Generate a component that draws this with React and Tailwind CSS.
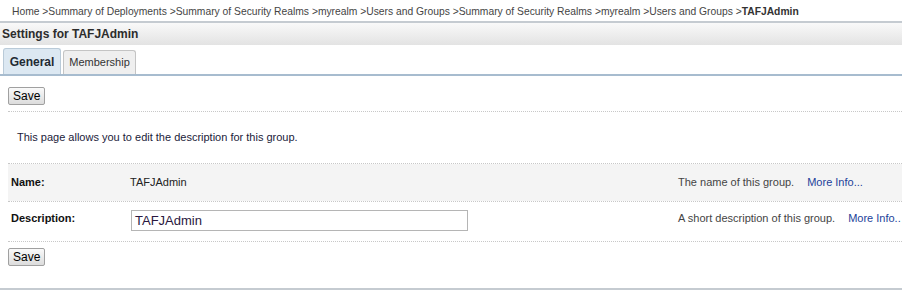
const crumbs = [
  'Home',
  'Summary of Deployments',
  'Summary of Security Realms',
  'myrealm',
  'Users and Groups',
  'Summary of Security Realms',
  'myrealm',
  'Users and Groups',
]

function SaveButton() {
  return (
    <button className="h-[18px] px-[4px] text-[12px] leading-none text-black border border-[#a0a0a0] rounded-[2px] bg-gradient-to-b from-[#fafafa] to-[#dcdcdc] [font-family:'Liberation_Sans',Arial,sans-serif]">
      Save
    </button>
  )
}

export default function App() {
  return (
    <div className="w-[902px] h-[291px] overflow-hidden bg-white text-[11px] text-[#333] [font-family:'Liberation_Sans',Tahoma,sans-serif]">
      {/* Breadcrumb */}
      <div className="h-[21px] pl-[12px] pt-[4px] whitespace-nowrap text-[10.3px] text-[#444]">
        {crumbs.map((c, i) => (
          <span key={i}>{i > 0 && ' >'}{c}</span>
        ))}
        <span> &gt;<b className="text-[#333]">TAFJAdmin</b></span>
      </div>
      <div className="h-[2px] bg-[#c5cbd1]" />

      {/* Header */}
      <div className="h-[22px] pl-[2px] flex items-center font-bold text-[12px] text-[#2c2c2c] bg-gradient-to-b from-[#f9f9f9] to-[#e3e3e3]">
        Settings for TAFJAdmin
      </div>

      {/* Tabs */}
      <div className="h-[31px] flex items-end gap-[2px] pl-[3px] border-b-2 border-[#a7bccf]">
        <div className="h-[26px] w-[58px] flex items-center justify-center font-bold text-[12px] text-[#1f2a33] bg-[#dce8f2] border border-b-0 border-[#b9cad8] rounded-t-[3px]">
          General
        </div>
        <div className="h-[24px] w-[73px] flex items-center justify-center text-[#333] bg-[#efefef] border border-b-0 border-[#c4c4c4] rounded-t-[3px]">
          Membership
        </div>
      </div>

      <div className="pl-[8px]">
        <div className="pt-[11px] pb-[6px]">
          <SaveButton />
        </div>
        <div className="border-t border-dotted border-[#c8c8c8]" />

        <div className="h-[51px] pl-[9px] flex items-center text-[#1b1b3a]">
          This page allows you to edit the description for this group.
        </div>
        <div className="border-t border-dotted border-[#c8c8c8]" />

        {/* Name row */}
        <div className="h-[37px] flex items-center bg-[#f4f4f4] pl-[3px]">
          <div className="w-[119px] font-bold text-[#111]">Name:</div>
          <div className="flex-1 text-[#222]">TAFJAdmin</div>
          <div className="w-[224px] whitespace-nowrap text-[#444]">
            The name of this group.<span className="ml-[13px] text-[#1d3f9a]">More Info...</span>
          </div>
        </div>
        <div className="border-t border-dotted border-[#c8c8c8]" />

        {/* Description row */}
        <div className="h-[39px] flex items-start bg-white pl-[3px]">
          <div className="w-[120px] pt-[8px] font-bold text-[#111]">Description:</div>
          <div className="flex-1 pt-[8px]">
            <div className="w-[337px] h-[21px] border border-[#b5b5b5] px-[3px] flex items-center text-[13px] text-[#2a1840]">
              TAFJAdmin
            </div>
          </div>
          <div className="w-[224px] pt-[8px] whitespace-nowrap text-[#444]">
            A short description of this group.<span className="ml-[13px] text-[#1d3f9a]">More Info..</span>
          </div>
        </div>
        <div className="border-t border-dotted border-[#c8c8c8]" />

        <div className="pt-[6px]">
          <SaveButton />
        </div>
      </div>

      <div className="mt-[22px] h-[2px] bg-[#c5cbd1]" />
    </div>
  )
}
